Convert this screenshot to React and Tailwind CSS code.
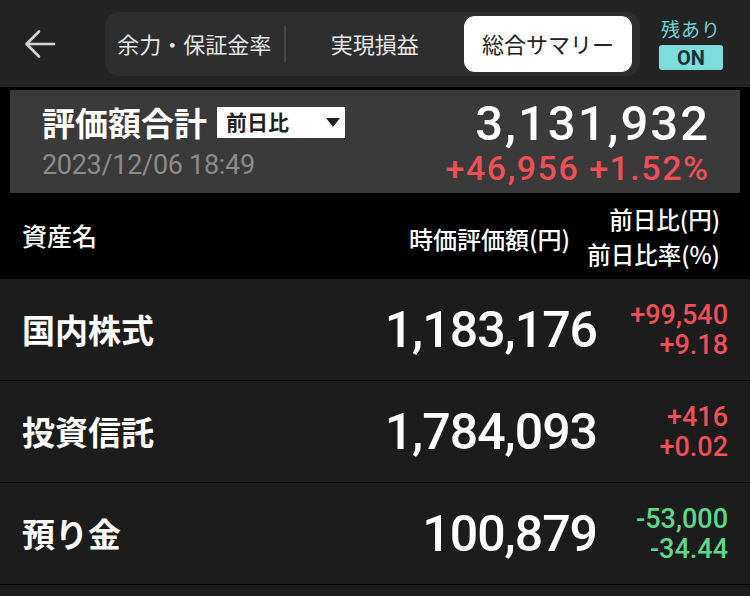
const jp = { fontFamily: '"Noto Sans CJK JP", "Noto Sans", sans-serif' };
const num = { fontFamily: 'Roboto, "Noto Sans CJK JP", sans-serif' };

const assets = [
    { name: '国内株式', value: '1,183,176', diff: '+99,540', rate: '+9.18', up: true },
    { name: '投資信託', value: '1,784,093', diff: '+416', rate: '+0.02', up: true },
    { name: '預り金', value: '100,879', diff: '-53,000', rate: '-34.44', up: false },
];

function BackArrow() {
    return (
        <svg width="32" height="32" viewBox="0 0 32 32" fill="none" stroke="#d4d4d4" strokeWidth="2.6" strokeLinecap="round" strokeLinejoin="round">
            <path d="M30 16H3" />
            <path d="M15 3.5 2.5 16 15 28.5" />
        </svg>
    );
}

export default function App() {
    return (
        <div className="w-[750px] h-[596px] overflow-hidden bg-[#1c1c1c] text-white" style={jp}>
            {/* Top bar */}
            <div className="h-[87px] bg-[#242424] flex items-center">
                <div className="w-[105px] pl-[24px] flex items-center">
                    <BackArrow />
                </div>
                <div className="w-[535px] h-[64px] rounded-[14px] bg-[#2e2e2e] flex items-center pr-[8px]">
                    <div className="flex-1 text-center text-[22px] text-[#e6e6e6]">余力・保証金率</div>
                    <div className="w-[2px] h-[36px] bg-[#474747]" />
                    <div className="flex-1 text-center text-[22px] text-[#e6e6e6]">実現損益</div>
                    <div className="w-[168px] h-[56px] rounded-[11px] bg-white flex items-center justify-center text-[22px] text-[#222]">
                        総合サマリー
                    </div>
                </div>
                <div className="flex-1 flex flex-col items-center pr-[8px]">
                    <div className="text-[19px] leading-[24px] text-[#72d4d4] tracking-[1px]">残あり</div>
                    <div className="mt-[4px] w-[64px] h-[25px] rounded-[3px] bg-[#7fdcdc] flex items-center justify-center text-[20px] font-bold text-[#183436]" style={num}>
                        ON
                    </div>
                </div>
            </div>

            {/* Valuation summary */}
            <div className="bg-black px-[10px] pt-[3px]">
                <div className="h-[103px] bg-[#3a3a3a] pl-[32px] pr-[32px] pt-[10px] flex justify-between">
                    <div>
                        <div className="flex items-center h-[44px]">
                            <span className="text-[33px] font-bold leading-none">評価額合計</span>
                            <div className="ml-[10px] w-[128px] h-[31px] bg-white flex items-center justify-between pl-[9px] pr-[5px] text-[21px] font-bold text-[#1f1f1f]">
                                <span>前日比</span>
                                <svg width="14" height="9" viewBox="0 0 14 9"><path d="M0 0h14L7 9z" fill="#1f1f1f" /></svg>
                            </div>
                        </div>
                        <div className="mt-[6px] text-[27px] leading-[30px] text-[#8b8b8b] tracking-[-0.3px]" style={num}>
                            2023/12/06 18:49
                        </div>
                    </div>
                    <div className="flex flex-col items-end" style={num}>
                        <div className="text-[49px] leading-[48px] font-medium tracking-[2px] mr-[-2px]">3,131,932</div>
                        <div className="mt-[2px] text-[34px] leading-[36px] font-medium text-[#ee4f59] tracking-[1.5px] mr-[-1.5px]">
                            +46,956 +1.52%
                        </div>
                    </div>
                </div>
            </div>

            {/* Column headers */}
            <div className="h-[86px] bg-black flex items-center pl-[22px] pr-[30px]">
                <div className="flex-1 text-[25px] font-medium">資産名</div>
                <div className="text-[24px] font-medium mt-[6px]">時価評価額(円)</div>
                <div className="w-[150px] flex flex-col items-end text-[23.5px] font-medium leading-[35px] mt-[2px]">
                    <span>前日比(円)</span>
                    <span>前日比率(%)</span>
                </div>
            </div>

            {/* Asset rows */}
            {assets.map((a) => (
                <div key={a.name} className="h-[102px] border-b-[1.5px] border-black flex items-center pl-[22px] pr-[22px]">
                    <div className="flex-1 text-[33px] font-bold">{a.name}</div>
                    <div className="text-[50px] font-medium tracking-[-1px] leading-none" style={num}>{a.value}</div>
                    <div
                        className={`w-[131px] flex flex-col items-end text-[27px] font-medium leading-[30px] ${a.up ? 'text-[#ee4f59]' : 'text-[#5cd88c]'}`}
                        style={num}
                    >
                        <span>{a.diff}</span>
                        <span>{a.rate}</span>
                    </div>
                </div>
            ))}
        </div>
    );
}
